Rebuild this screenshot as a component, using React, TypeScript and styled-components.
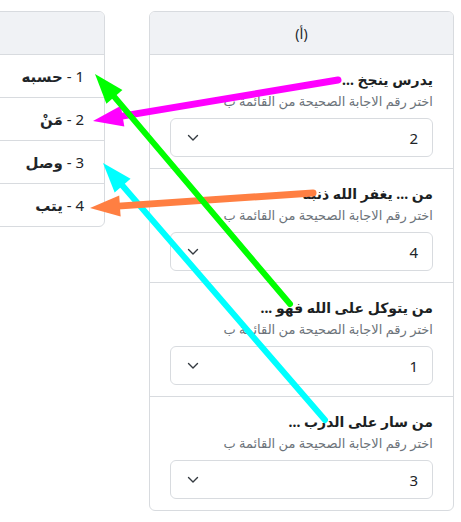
import React from 'react'
import styled, { createGlobalStyle } from 'styled-components'

const GlobalStyle = createGlobalStyle`
  html, body {
    margin: 0;
    padding: 0;
    background: #fff;
  }
  body {
    font-family: "Noto Sans", "DejaVu Sans", sans-serif;
    color: #212529;
    direction: rtl;
  }
`

const Page = styled.div`
  position: relative;
  width: 461px;
  height: 522px;
  overflow: hidden;
  display: flex;
  align-items: flex-start;
  gap: 44px;
  padding: 11px 7px 0;
  box-sizing: border-box;
`

const Card = styled.div`
  width: 303px;
  flex-shrink: 0;
  border: 1px solid #d8dbdf;
  border-radius: 6px;
  background: #fff;
  overflow: hidden;
`

const CardHeader = styled.div`
  height: 42px;
  display: flex;
  align-items: center;
  justify-content: center;
  background: #f0f2f5;
  border-bottom: 1px solid #d8dbdf;
  font-size: 14px;
`

const AnswerRow = styled.div`
  height: 42px;
  display: flex;
  align-items: center;
  padding: 0 20px;
  font-size: 15px;
  border-bottom: 1px solid #d8dbdf;

  &:last-child {
    border-bottom: none;
  }

  b {
    font-weight: 700;
  }
`

const QuestionRow = styled.div`
  padding: 14px 20px 11px;
  border-bottom: 1px solid #d8dbdf;

  &:last-child {
    border-bottom: none;
  }
`

const QuestionTitle = styled.div`
  font-size: 14px;
  line-height: 22px;
  font-weight: 700;
  color: #1c1f23;
`

const Hint = styled.div`
  margin-top: 1px;
  font-size: 13px;
  line-height: 18px;
  color: #6c737a;
`

const SelectBox = styled.div`
  margin-top: 8px;
  height: 39px;
  box-sizing: border-box;
  border: 1px solid #d8dbdf;
  border-radius: 6px;
  display: flex;
  align-items: center;
  justify-content: space-between;
  padding: 0 14px 0 16px;
  font-size: 15px;
`

const Overlay = styled.svg`
  position: absolute;
  left: 0;
  top: 0;
  pointer-events: none;
`

const answers = [
  { n: 1, word: 'حسبه' },
  { n: 2, word: 'مَنْ' },
  { n: 3, word: 'وصل' },
  { n: 4, word: 'يتب' }
]

const questions = [
  { title: 'يدرس ينجخ ...', value: 2 },
  { title: 'من ... يغفر الله ذنبه', value: 4 },
  { title: 'من يتوكل على الله فهو ...', value: 1 },
  { title: 'من سار على الدرب ...', value: 3 }
]

// arrows drawn over the two lists, tail -> tip
const arrows = [
  { from: [338, 80], to: [93, 121], color: '#ff00ff', w: 7 },
  { from: [325, 420], to: [103, 163], color: '#00ffff', w: 6 },
  { from: [313, 193], to: [90, 208], color: '#ff7f42', w: 7 },
  { from: [290, 304], to: [95, 74], color: '#00ff00', w: 6 }
]

const Arrow = ({ from, to, color, w }: { from: number[], to: number[], color: string, w: number }) => {
  const dx = to[0] - from[0]
  const dy = to[1] - from[1]
  const len = Math.sqrt(dx * dx + dy * dy)
  const ux = dx / len
  const uy = dy / len
  const L = 30
  const W = 10.5
  const bx = to[0] - ux * L
  const by = to[1] - uy * L
  const pts = [
    [to[0], to[1]],
    [bx - uy * W, by + ux * W],
    [bx + uy * W, by - ux * W]
  ].map(p => p.join(',')).join(' ')
  return (
    <g>
      <line x1={from[0]} y1={from[1]} x2={bx + ux * 2} y2={by + uy * 2} stroke={color} strokeWidth={w} strokeLinecap="round" />
      <polygon points={pts} fill={color} />
    </g>
  )
}

const Chevron = () => (
  <svg width="12" height="8" viewBox="0 0 12 8">
    <path d="M1.5 1.5 L6 6 L10.5 1.5" fill="none" stroke="#343a40" strokeWidth="1.4" strokeLinecap="round" strokeLinejoin="round" />
  </svg>
)

export default function App () {
  return (
    <>
      <GlobalStyle />
      <Page>
        <Card>
          <CardHeader>(أ)</CardHeader>
          {questions.map(q => (
            <QuestionRow key={q.title}>
              <QuestionTitle>{q.title}</QuestionTitle>
              <Hint>اختر رقم الاجابة الصحيحة من القائمة ب</Hint>
              <SelectBox>
                <span>{q.value}</span>
                <Chevron />
              </SelectBox>
            </QuestionRow>
          ))}
        </Card>
        <Card>
          <CardHeader />
          {answers.map(a => (
            <AnswerRow key={a.n}>
              <span>{a.n} - <b>{a.word}</b></span>
            </AnswerRow>
          ))}
        </Card>
        <Overlay width="461" height="522" viewBox="0 0 461 522">
          {arrows.map(a => <Arrow key={a.color} {...a} />)}
        </Overlay>
      </Page>
    </>
  )
}
